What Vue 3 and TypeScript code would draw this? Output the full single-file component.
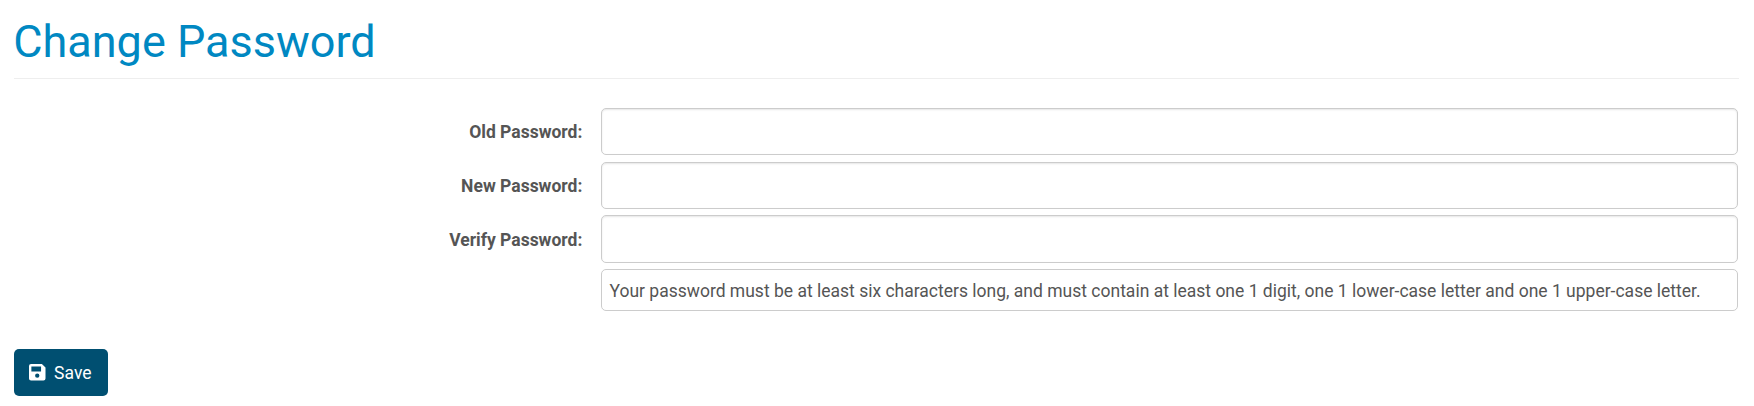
<script setup lang="ts">
const fields: { id: string; label: string }[] = [
  { id: 'old', label: 'Old Password:' },
  { id: 'new', label: 'New Password:' },
  { id: 'verify', label: 'Verify Password:' },
]
</script>

<template>
  <main class="page">
    <h1 class="title">Change Password</h1>
    <form class="form" @submit.prevent>
      <div v-for="f in fields" :key="f.id" class="row">
        <label class="label" :for="f.id">{{ f.label }}</label>
        <input :id="f.id" class="control" type="password" />
      </div>
      <div class="row">
        <div class="note">Your password must be at least six characters long, and must contain at least one 1 digit, one 1 lower-case letter and one 1 upper-case letter.</div>
      </div>
      <button class="save" type="submit">
        <svg class="icon" viewBox="0 0 16 16" aria-hidden="true">
          <path fill-rule="evenodd" d="M2 0H12.5L16 3.5V14Q16 16 14 16H2Q0 16 0 14V2Q0 0 2 0ZM2.3 2.4V7.3H11.7V2.4ZM8 9.2A2.1 2.1 0 1 0 8 13.4A2.1 2.1 0 1 0 8 9.2Z" />
        </svg>
        <span class="save-text">Save</span>
      </button>
    </form>
  </main>
</template>

<style>
body { background: #fff; }
</style>

<style scoped>
.page { box-sizing: border-box; padding: 14px 15px 0 13.6px; font-family: Roboto, sans-serif; font-size: 17.5px; color: #555; }
.title { box-sizing: border-box; height: 65px; margin: 0 0 29.1px; border-bottom: 1px solid #eee; color: #0088c2; font-size: 45px; font-weight: 400; line-height: 56px; text-indent: -0.4px; }
.form { padding-right: 1px; }
.row { display: grid; grid-template-columns: 568.8px minmax(0, 1fr); column-gap: 18.6px; margin-bottom: 6.47px; }
.label { box-sizing: border-box; height: 47.2px; padding-top: 0.3px; font-weight: 700; line-height: 49px; text-align: right; }
.control, .note { box-sizing: border-box; width: 100%; border: 1px solid #ccc; border-radius: 5px; background: #fff; }
.control { height: 47.2px; padding: 8px; box-shadow: inset 0 1px 2px rgba(0, 0, 0, 0.1); }
.note { grid-column: 2; height: 42px; padding: 0 7.5px; line-height: 42.5px; white-space: nowrap; }
.save { display: flex; align-items: center; gap: 8.5px; box-sizing: border-box; width: 94.4px; height: 47px; margin-top: 37.9px; padding: 0 15.5px; border: 0; border-radius: 5px; background: #004f71; color: #fff; font: 400 17.5px Roboto, sans-serif; }
.save-text { padding-top: 1.4px; }
.icon { flex: none; width: 16.5px; height: 16.5px; fill: #fff; }
</style>
